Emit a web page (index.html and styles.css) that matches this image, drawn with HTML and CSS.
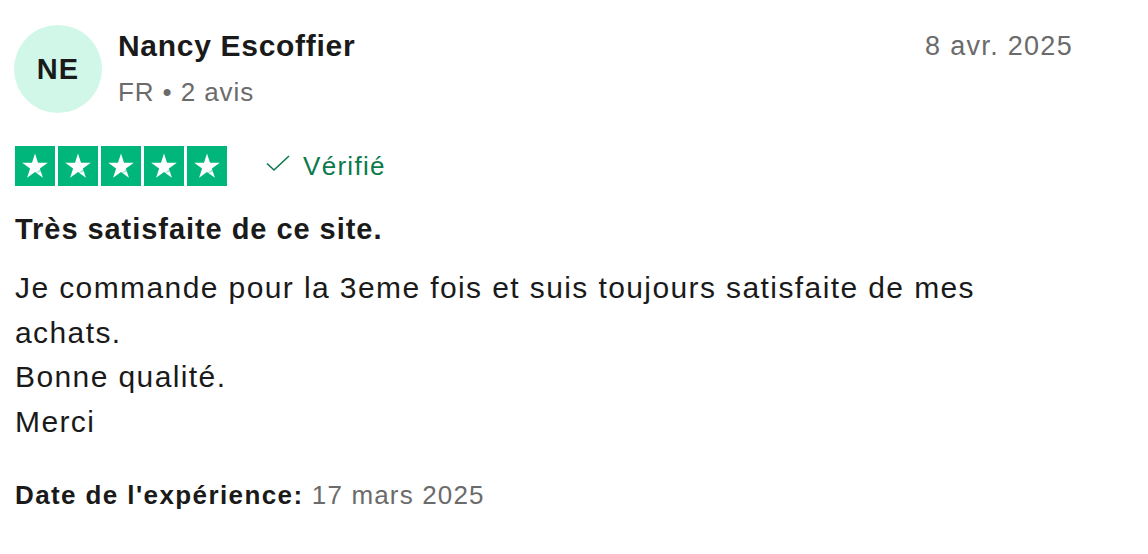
FILE: index.html
```html
<!DOCTYPE html>
<html lang="fr">
<head>
    <meta charset="UTF-8">
    <meta name="viewport" content="width=device-width, initial-scale=1.0">
    <title>Avis - Nancy Escoffier</title>
    <link rel="stylesheet" href="styles.css">
</head>
<body>

<article class="review">
    <header class="review-header">
        <div class="avatar">NE</div>
        <div class="consumer">
            <div class="consumer-name">Nancy Escoffier</div>
            <div class="consumer-meta">FR &bull; 2 avis</div>
        </div>
        <time class="review-date">8 avr. 2025</time>
    </header>

    <div class="rating-row">
        <div class="stars">
            <span class="star-box"><svg viewBox="0 0 40 40"><path class="star" d="M20 7.5l3 9.3h9.8l-7.9 5.7 3 9.3-7.9-5.7-7.9 5.7 3-9.3-7.9-5.7h9.8z"/><path class="star-shade" d="M25.9 22.5l0.9 3.1-6.8 1.9z"/></svg></span>
            <span class="star-box"><svg viewBox="0 0 40 40"><path class="star" d="M20 7.5l3 9.3h9.8l-7.9 5.7 3 9.3-7.9-5.7-7.9 5.7 3-9.3-7.9-5.7h9.8z"/><path class="star-shade" d="M25.9 22.5l0.9 3.1-6.8 1.9z"/></svg></span>
            <span class="star-box"><svg viewBox="0 0 40 40"><path class="star" d="M20 7.5l3 9.3h9.8l-7.9 5.7 3 9.3-7.9-5.7-7.9 5.7 3-9.3-7.9-5.7h9.8z"/><path class="star-shade" d="M25.9 22.5l0.9 3.1-6.8 1.9z"/></svg></span>
            <span class="star-box"><svg viewBox="0 0 40 40"><path class="star" d="M20 7.5l3 9.3h9.8l-7.9 5.7 3 9.3-7.9-5.7-7.9 5.7 3-9.3-7.9-5.7h9.8z"/><path class="star-shade" d="M25.9 22.5l0.9 3.1-6.8 1.9z"/></svg></span>
            <span class="star-box"><svg viewBox="0 0 40 40"><path class="star" d="M20 7.5l3 9.3h9.8l-7.9 5.7 3 9.3-7.9-5.7-7.9 5.7 3-9.3-7.9-5.7h9.8z"/><path class="star-shade" d="M25.9 22.5l0.9 3.1-6.8 1.9z"/></svg></span>
        </div>
        <div class="verified">
            <svg class="check" viewBox="0 0 24 24"><path d="M1 9.5l7 6.5L23 2"/></svg>
            <span>Vérifié</span>
        </div>
    </div>

    <h2 class="review-title">Très satisfaite de ce site.</h2>
    <p class="review-text">Je commande pour la 3eme fois et suis toujours satisfaite de mes achats.<br>Bonne qualité.<br>Merci</p>

    <p class="experience"><strong>Date de l'expérience:</strong> 17 mars 2025</p>
</article>

</body>
</html>
```

FILE: styles.css
```css
body {
    font-family: "Liberation Sans", Arial, sans-serif;
    background-color: #ffffff;
    color: #1a1a1a;
    margin: 0;
    padding: 0;
}
.review {
    width: 1058px;
    padding: 25px 0 0 15px;
}
.review-header {
    display: flex;
    align-items: flex-start;
}
.avatar {
    width: 88px;
    height: 88px;
    margin-left: -1px;
    border-radius: 50%;
    background-color: #d1f7e9;
    display: flex;
    align-items: center;
    justify-content: center;
    font-size: 29px;
    font-weight: bold;
    letter-spacing: 1px;
    color: #1a1a1a;
    flex-shrink: 0;
}
.consumer {
    margin-left: 16px;
    padding-top: 4px;
    flex: 1;
}
.consumer-name {
    font-size: 30px;
    font-weight: bold;
    letter-spacing: 0.7px;
    line-height: 34px;
}
.consumer-meta {
    font-size: 26px;
    letter-spacing: 0.9px;
    color: #6b6b6b;
    line-height: 30px;
    margin-top: 14px;
}
.review-date {
    font-size: 27px;
    letter-spacing: 1.3px;
    color: #6b6b6b;
    line-height: 30px;
    margin-top: 6px;
}
.rating-row {
    display: flex;
    align-items: center;
    margin-top: 33px;
}
.stars {
    display: flex;
    gap: 3px;
}
.star-box {
    width: 40px;
    height: 40px;
    background-color: #00b67a;
    display: block;
}
.star-box svg {
    width: 40px;
    height: 40px;
    display: block;
}
.star {
    fill: #ffffff;
}
.star-shade {
    fill: #00b67a;
    opacity: 0.35;
}
.verified {
    display: flex;
    align-items: center;
    margin-left: 39px;
    color: #0a7a4b;
    font-size: 26px;
    letter-spacing: 1.3px;
}
.check {
    width: 24px;
    height: 24px;
    margin-right: 13px;
    fill: none;
    stroke: #0a7a4b;
    stroke-width: 1.6;
}
.review-title {
    font-size: 29px;
    font-weight: bold;
    letter-spacing: 0.95px;
    margin: 26px 0 0;
    line-height: 34px;
}
.review-text {
    font-size: 30px;
    letter-spacing: 1.4px;
    line-height: 44.5px;
    margin: 20px 0 0;
    width: 1000px;
}
.experience {
    font-size: 26px;
    letter-spacing: 1.15px;
    color: #6b6b6b;
    margin: 36px 0 0;
    line-height: 30px;
}
.experience strong {
    color: #1a1a1a;
    letter-spacing: 1.4px;
}
```
